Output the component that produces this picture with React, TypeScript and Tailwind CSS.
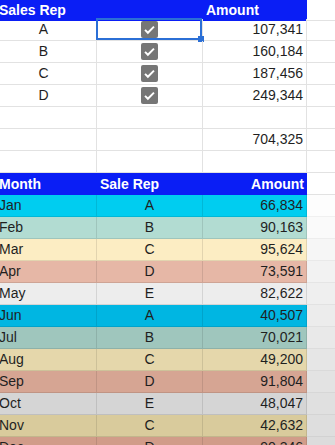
import React from "react";

type DataRow = {
  month: string;
  rep: string;
  amount: string;
  bg: string;
  side: string;
};

const topRows = [
  { rep: "A", amount: "107,341", checked: true, selected: true },
  { rep: "B", amount: "160,184", checked: true },
  { rep: "C", amount: "187,456", checked: true },
  { rep: "D", amount: "249,344", checked: true },
  { rep: "", amount: "" },
  { rep: "", amount: "704,325" },
  { rep: "", amount: "" },
];

// colours as seen (video shading gets darker toward the bottom)
const dataRows: DataRow[] = [
  { month: "Jan", rep: "A", amount: "66,834", bg: "bg-[#00cdf0]", side: "bg-[#fdfdfd]" },
  { month: "Feb", rep: "B", amount: "90,163", bg: "bg-[#b2dcd2]", side: "bg-[#fafafa]" },
  { month: "Mar", rep: "C", amount: "95,624", bg: "bg-[#fcedc3]", side: "bg-[#f6f6f6]" },
  { month: "Apr", rep: "D", amount: "73,591", bg: "bg-[#e6b7a6]", side: "bg-[#f2f2f2]" },
  { month: "May", rep: "E", amount: "82,622", bg: "bg-[#ededed]", side: "bg-[#efefef]" },
  { month: "Jun", rep: "A", amount: "40,507", bg: "bg-[#00b6e2]", side: "bg-[#ececec]" },
  { month: "Jul", rep: "B", amount: "70,021", bg: "bg-[#9fc6bd]", side: "bg-[#e9e9e9]" },
  { month: "Aug", rep: "C", amount: "49,200", bg: "bg-[#e5d7ab]", side: "bg-[#e6e6e6]" },
  { month: "Sep", rep: "D", amount: "91,804", bg: "bg-[#d6a593]", side: "bg-[#e3e3e3]" },
  { month: "Oct", rep: "E", amount: "48,047", bg: "bg-[#d5d5d5]", side: "bg-[#e0e0e0]" },
  { month: "Nov", rep: "C", amount: "42,632", bg: "bg-[#d9cb9c]", side: "bg-[#dedede]" },
  { month: "Dec", rep: "D", amount: "90,346", bg: "bg-[#d19c89]", side: "bg-[#dcdcdc]" },
];

const GRID = "grid grid-cols-[106px_106px_104px_40px]";

function Checkbox() {
  return (
    <span className="grid h-[17px] w-[17px] place-items-center rounded-[2px] bg-[#767676]">
      <svg viewBox="0 0 16 16" className="h-[13px] w-[13px]" fill="none">
        <path d="M2.5 8.5l3.5 3.5 7.5-7.5" stroke="white" strokeWidth="2.4" />
      </svg>
    </span>
  );
}

export default function App() {
  return (
    <div
      className="h-[445px] w-[335px] overflow-hidden bg-white text-[14px] text-[#1f1f1f]"
      style={{ fontFamily: '"Liberation Sans", Arial, sans-serif' }}
    >
      <div className="-ml-[9px] w-[356px]">
        {/* top table header */}
        <div className={`${GRID} h-[19px] font-bold text-white`}>
          <div className="flex items-center bg-[#0a1ef5] pl-[8px]">Sales Rep</div>
          <div className="bg-[#0a1ef5]" />
          <div className="flex items-center bg-[#0a1ef5] pl-[3px]">Amount</div>
          <div className="border-b border-[#e2e2e2] bg-white" />
        </div>

        {topRows.map((r, i) => (
          <div key={i} className={`${GRID} h-[22px]`}>
            <div className="flex items-center justify-center border-b border-r border-[#e2e2e2]">
              {r.rep}
            </div>
            <div className="relative flex items-center justify-center border-b border-r border-[#e2e2e2]">
              {r.checked && <Checkbox />}
              {r.selected && (
                <div className="absolute -left-px -top-px bottom-0 right-0 border-2 border-[#2b6fd6]">
                  <span className="absolute -bottom-[4px] -right-[4px] h-[6px] w-[6px] bg-[#2b6fd6]" />
                </div>
              )}
            </div>
            <div className="flex items-center justify-end border-b border-r border-[#e2e2e2] pr-[3px]">
              {r.amount}
            </div>
            <div className="border-b border-[#e2e2e2]" />
          </div>
        ))}

        {/* bottom table header */}
        <div className={`${GRID} h-[22px] font-bold text-white`}>
          <div className="flex items-center bg-[#0a1ef5] pl-[8px]">Month</div>
          <div className="flex items-center bg-[#0a1ef5] pl-[3px]">Sale Rep</div>
          <div className="flex items-center justify-end bg-[#0a1ef5] pr-[3px]">Amount</div>
          <div className="border-b border-[#e2e2e2] bg-white" />
        </div>

        {dataRows.map((r) => (
          <div key={r.month} className={`${GRID} h-[22px]`}>
            <div className={`flex items-center border-b border-r border-black/10 pl-[8px] ${r.bg}`}>
              {r.month}
            </div>
            <div className={`flex items-center justify-center border-b border-r border-black/10 ${r.bg}`}>
              {r.rep}
            </div>
            <div className={`flex items-center justify-end border-b border-r border-black/10 pr-[3px] ${r.bg}`}>
              {r.amount}
            </div>
            <div className={`border-b border-black/5 ${r.side}`} />
          </div>
        ))}
      </div>
    </div>
  );
}
